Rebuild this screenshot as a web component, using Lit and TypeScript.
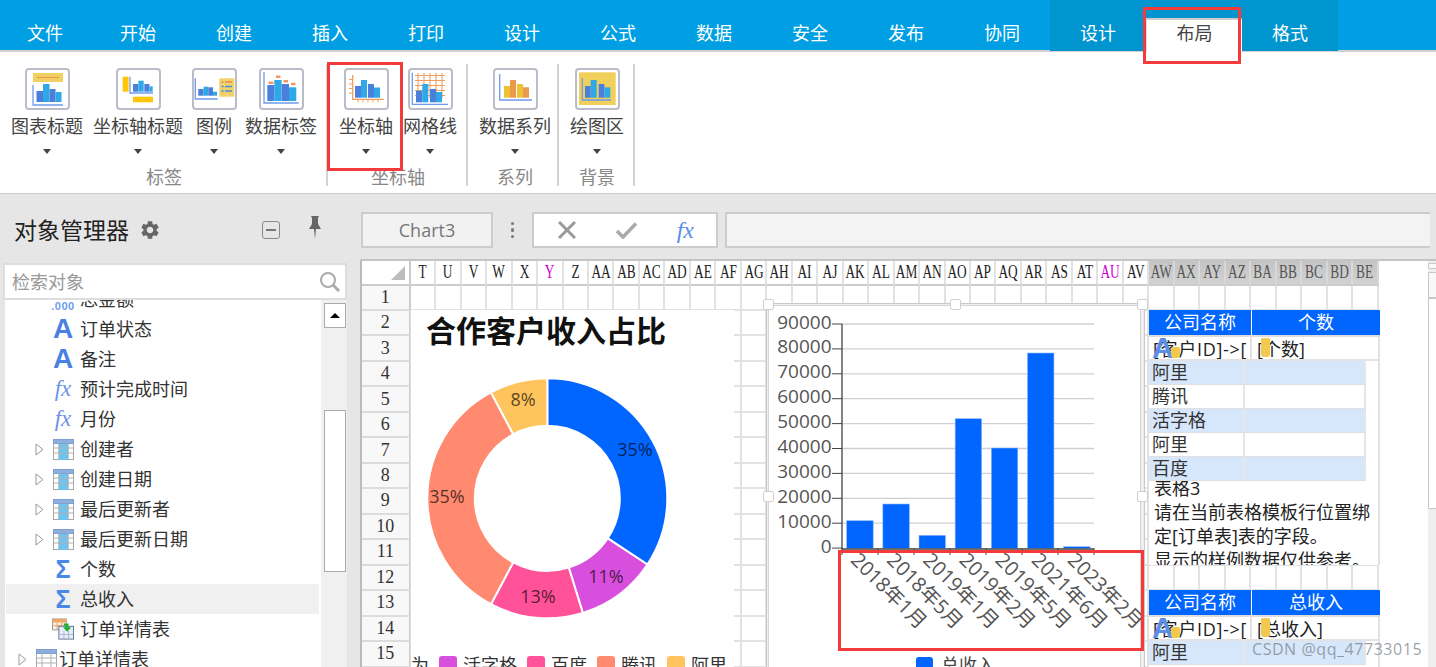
import {LitElement, css, html, svg} from 'lit';
import {customElement} from 'lit/decorators.js';

const TABS = ['文件', '开始', '创建', '插入', '打印', '设计', '公式', '数据', '安全', '发布', '协同'];
const COLS = ['T', 'U', 'V', 'W', 'X', 'Y', 'Z', 'AA', 'AB', 'AC', 'AD', 'AE', 'AF', 'AG', 'AH', 'AI', 'AJ', 'AK', 'AL', 'AM', 'AN', 'AO', 'AP', 'AQ', 'AR', 'AS', 'AT', 'AU', 'AV', 'AW', 'AX', 'AY', 'AZ', 'BA', 'BB', 'BC', 'BD', 'BE'];
const ROWS = Array.from({length: 16}, (_, i) => i + 1);

const TREE = [
  {icon: 'num', text: '总金额'},
  {icon: 'a', text: '订单状态'},
  {icon: 'a', text: '备注'},
  {icon: 'fx', text: '预计完成时间'},
  {icon: 'fx', text: '月份'},
  {icon: 'table', text: '创建者', caret: true},
  {icon: 'table', text: '创建日期', caret: true},
  {icon: 'table', text: '最后更新者', caret: true},
  {icon: 'table', text: '最后更新日期', caret: true},
  {icon: 'sum', text: '个数'},
  {icon: 'sum', text: '总收入', active: true},
  {icon: 'detail', text: '订单详情表'},
  {icon: 'plain', text: '订单详情表', caret: true, top: true},
];

// one bar set per ribbon icon: left edges, tops, base line, bar colours
const BLUE = ['#4a7fdc', '#2fa8e8'];
const WARM = ['#f0c233', '#ea9a4c'];
const bars = (xs: number[], w: number[], tops: number[], base: number, c = BLUE) =>
  xs.map((x, i) => svg`<rect x=${x} y=${tops[i]} width=${w[i]} height=${base - tops[i]} fill=${c[i % 2]}></rect>`);
const axes = (x: number, top: number, y: number, right: number, c = '#6d9bea') =>
  svg`<path d="M${x} ${top}V${y}H${right}" fill="none" stroke=${c} stroke-width="1.3"></path>`;

const ICONS = [
  svg`<rect x="8" y="5" width="30" height="9" fill="#f2cf62"></rect><path d="M12 9.5H34" stroke="#e59a4e" stroke-width="1.2"></path>
    ${axes(8, 17, 37, 38)}${bars([11.5, 18, 24.5, 30.5], [6.5, 6.5, 6, 6], [23, 16, 21, 24], 34)}`,
  svg`<rect x="6.6" y="8.7" width="6" height="15" fill="#ffc60a"></rect><rect x="17" y="28.7" width="20" height="5.6" fill="#ffc60a"></rect>
    ${axes(14, 8.7, 25, 37)}${bars([17, 22.4, 28.3, 33.4], [5.4, 5.3, 5.1, 3.3], [16, 12.7, 16, 18.3], 23.7)}`,
  svg`<rect x="27.3" y="10.3" width="15" height="18.4" fill="#f2d16c"></rect>
    <path d="M29.5 14h2M33 14h7" stroke="#e58a4e" stroke-width="1.6"></path><path d="M29.5 18.500h2M33 18.500h7M29.500 23h2M33 23h7" stroke="#3f8fdd" stroke-width="1.6"></path>
    ${axes(3.3, 10.3, 31, 25.7)}${bars([6.300, 11.600, 16.300, 21], [5.300, 4.700, 4.700, 4], [21, 18.700, 19.300, 23.700], 27.700)}`,
  svg`${axes(5, 4, 35, 39.700)}${bars([8.300, 15.300, 22.700, 30], [7, 7.300, 7.300, 7.300], [17, 12, 16, 19.300], 33)}
    <path d="M9.500 14.700h5M17 8.700h4.500M24.500 13.300h4.500M32 16h4.500" stroke="#ea9a6c" stroke-width="2.600"></path>`,
  svg`${axes(8.700, 7, 31.300, 39.700, '#ef9f5c')}<path d="M5 11.500h3.700M5 16h3.700M5 20.500h3.700M5 25h3.700M14 31.300v3M19 31.300v3M24 31.300v3M29 31.300v3M34 31.300v3" stroke="#ef9f5c" stroke-width="1"></path>
    ${bars([11, 17, 24, 30], [6, 6, 6, 6], [18, 12, 16, 19.500], 29.700)}`,
  svg`<path d="M7 7.500H37M7 12.500H37M7 17.500H37M7 22.500H37M7 27.500H37M10 5V30M16 5V30M22 5V30M28 5V30M34 5V30" stroke="#ef9f5c" stroke-width="1.100"></path>
    ${axes(4.300, 4.700, 36.300, 40)}${bars([8, 14.300, 22, 28], [6.300, 6, 6, 6], [22.700, 16, 21, 24], 34.300)}`,
  svg`${axes(6.700, 6, 32, 39)}${bars([11, 17, 24, 30], [6, 6, 6, 6], [18, 12, 16, 19.300], 29.700, WARM)}`,
  svg`<rect x="4" y="4.300" width="36.700" height="32.700" fill="#f0cf5a"></rect>
    ${axes(7.300, 10, 32, 36)}${bars([10, 15.700, 23.700, 29.300], [5.700, 6, 5.600, 6], [18, 12, 16, 19.300], 29.700)}`,
];

const RIBBON = [
  {label: '标签', items: [{t: '图表标题', i: 0}, {t: '坐标轴标题', i: 1}, {t: '图例', i: 2, narrow: true}, {t: '数据标签', i: 3}]},
  {label: '坐标轴', items: [{t: '坐标轴', i: 4}, {t: '网格线', i: 5}]},
  {label: '系列', items: [{t: '数据系列', i: 6}], tight: true},
  {label: '背景', items: [{t: '绘图区', i: 7}]},
];

// donut segments, degrees clockwise from 12 o'clock, in page coordinates
const DONUT = [
  {from: 0, to: 123.5, color: '#0066ff', label: '35%', x: 635, y: 450},
  {from: 123.5, to: 162.8, color: '#d94fdd', label: '11%', x: 606, y: 577},
  {from: 162.8, to: 208, color: '#ff5299', label: '13%', x: 538, y: 597},
  {from: 208, to: 332, color: '#ff8a70', label: '35%', x: 447, y: 497},
  {from: 332, to: 360, color: '#ffc45e', label: '8%', x: 523, y: 400},
];
const CX = 547.3;
const CY = 499.3;
const polar = (r: number, deg: number) => {
  const a = (deg * Math.PI) / 180;
  return `${CX + r * Math.sin(a)} ${CY - r * Math.cos(a)}`;
};
const slice = (from: number, to: number) => {
  const big = to - from > 180 ? 1 : 0;
  return `M${polar(120, from)}A120 120 0 ${big} 1 ${polar(120, to)}L${polar(72.5, to)}A72.5 72.5 0 ${big} 0 ${polar(72.5, from)}Z`;
};

const BAR_TOPS = [520.7, 504, 535.3, 418.7, 448, 353, 546.7];
const MONTHS = ['2018年1月', '2018年5月', '2019年1月', '2019年2月', '2019年5月', '2021年6月', '2023年2月'];
const TICKS = [90000, 80000, 70000, 60000, 50000, 40000, 30000, 20000, 10000, 0];

@customElement('app-root')
export class AppRoot extends LitElement {
  static styles = css`
    :host {
      display: block;
      position: relative;
      width: 1436px;
      height: 667px;
      overflow: hidden;
      background: #e6e6e6;
      font: 18px/24px "Open Sans", "Noto Sans CJK SC", sans-serif;
      color: #333;
    }
    * { box-sizing: border-box; }

    .tabs { display: flex; height: 52px; background: #009fe3; border-bottom: 2px solid #d0d0d0; }
    .tab { width: 96px; height: 50px; padding-top: 21px; text-align: center; color: #fff; }
    .tab.first { width: 90px; }
    .context { display: flex; height: 51px; background: #0095cf; }
    .tab.active {
      position: relative;
      height: 34px;
      margin-top: 18px;
      padding-top: 1px;
      background: #fff;
      color: #444;
      border-top: 2px solid #ccc;
      border-left: 1px solid #ddd;
    }

    .ribbon { display: flex; height: 142px; background: #fff; border-bottom: 1px solid #ccc; }
    .group {
      display: flex;
      flex-direction: column;
      height: 122px;
      margin-top: 12px;
      padding: 4px 9px 0 11px;
      border-right: 2px solid #d4d4d4;
    }
    .group.tight { padding-right: 6px; }
    .btns { display: flex; gap: 10px; }
    .btn { display: flex; flex-direction: column; align-items: center; }
    .btn.narrow { margin: 0 -1.5px; }
    .icon { width: 45px; height: 42px; background: #fff; border: 2px solid #babdc9; border-radius: 4px; display: block; }
    .btn-label { margin-top: 4px; white-space: nowrap; color: #444; }
    .arrow { width: 0; height: 0; margin-top: 11px; border: 4px solid transparent; border-top: 5px solid #444; border-bottom: 0; }
    .group-label { margin-top: auto; line-height: 18px; text-align: center; color: #888; }

    .work { display: flex; height: 473px; }

    .panel { display: flex; flex-direction: column; width: 360px; flex: none; }
    .panel-head { display: flex; align-items: center; height: 69px; padding: 3px 0 0 14px; }
    .panel-title { font-size: 23px; color: #222; }
    .gear { margin-left: 10px; }
    .minus {
      display: flex;
      align-items: center;
      justify-content: center;
      width: 18px;
      height: 18px;
      margin-left: 101px;
      border: 1.500px solid #888;
      border-radius: 3px;
    }
    .minus i { width: 10px; height: 1.500px; background: #777; }
    .pin { margin: -5px 0 0 29px; }
    .search {
      position: relative;
      z-index: 1;
      display: flex;
      align-items: center;
      justify-content: space-between;
      width: 344px;
      height: 37px;
      margin-left: 3px;
      padding: 0 4px 0 7px;
      background: #fff;
      border: 2px solid #ddd;
      color: #999;
    }
    .tree-wrap { display: flex; flex: 1; min-height: 0; margin-left: 5px; width: 342px; }
    .tree { width: 316px; overflow: hidden; background: #fff; }
    .tree-list { margin-top: -16px; }
    .row { display: flex; align-items: center; height: 30px; padding-left: 30px; white-space: nowrap; }
    .row.top { padding-left: 13px; }
    .row.active { background: #f0f0f0; margin-left: 1px; margin-right: 2px; padding-left: 29px; }
    .caret { width: 17px; flex: none; display: flex; }
    .ticon {
      display: flex;
      align-items: center;
      justify-content: center;
      width: 22px;
      height: 30px;
      margin-right: 6px;
      flex: none;
      color: #4a80e0;
      font-family: "Liberation Sans", sans-serif;
    }
    .row.top .ticon { margin-right: 2px; }
    .ticon.a { font-size: 28px; font-weight: 700; }
    .ticon.sum { font-size: 25px; font-weight: 700; color: #4a88e8; }
    .ticon.fx { font-family: "Liberation Serif", serif; font-style: italic; font-size: 23px; color: #6a93e8; }
    .ticon.num { font-size: 11px; font-weight: 700; letter-spacing: .5px; color: #6a9cf0; align-self: flex-end; height: 17px; }
    .vbar { display: flex; flex-direction: column; width: 26px; padding: 3px 1px 0 3px; background: #f0f0f0; }
    .vup { display: flex; align-items: center; justify-content: center; height: 25px; background: #fff; border: 1px solid #aaa; }
    .vup i { border: 5px solid transparent; border-bottom: 5px solid #000; border-top: 0; }
    .vthumb { height: 162px; margin-top: 82px; background: #fff; border: 1px solid #aaa; }

    .main { display: flex; flex-direction: column; flex: 1; min-width: 0; }
    .formula { display: flex; align-items: center; height: 36px; margin-top: 18px; }
    .name {
      width: 132px;
      height: 36px;
      margin-left: 1px;
      line-height: 33px;
      text-align: center;
      background: #f2f2f2;
      border: 2px solid #ccc;
      color: #777;
    }
    .dots { display: flex; flex-direction: column; gap: 3px; width: 39px; align-items: center; }
    .dots i { width: 3.500px; height: 3.500px; border-radius: 50%; background: #777; }
    .actions {
      display: flex;
      align-items: center;
      justify-content: space-between;
      width: 186px;
      height: 36px;
      padding: 0 22px 0 24px;
      background: #fff;
      border: 2px solid #ccc;
    }
    .fxbtn { font: italic 24px "Liberation Serif", serif; color: #5b8ee6; }
    .input { width: 705px; height: 36px; margin-left: 7px; background: #f3f3f3; border: 2px solid #ccc; border-right: 0; }

    .sheet-wrap { display: flex; height: 408px; margin-top: 11px; border-top: 2px solid #c4c4c4; }
    .sheet { position: relative; width: 1068px; overflow: hidden; background: #fff; border-left: 2px solid #bbb; }
    .grid { display: grid; grid-template-columns: 48.700px repeat(38, 25.480px); grid-template-rows: 24.500px repeat(16, 25.470px); }
    .cell { border-right: 2px solid #e2e2e2; border-bottom: 2px solid #e2e2e2; }
    .corner { position: relative; border-right: 2px solid #ccc; border-bottom: 2px solid #ccc; }
    .corner::after {
      content: "";
      position: absolute;
      right: 4px;
      bottom: 4px;
      border-style: solid;
      border-width: 0 0 14px 14px;
      border-color: transparent transparent #bdbdbd transparent;
    }
    .col {
      display: flex;
      align-items: center;
      justify-content: center;
      overflow: hidden;
      background: #fff;
      color: #222;
      font: 18px "Liberation Serif", serif;
      border-right: 2px solid #e2e2e2;
      border-bottom: 2px solid #ccc;
    }
    .col span { transform: scaleX(.74); white-space: nowrap; }
    .col.mark { color: #d000d0; }
    .col.dim { background: linear-gradient(#c4c4c4, #d2d2d2); color: #555; border-right-color: #d8d8d8; }
    .rowh {
      display: flex;
      align-items: center;
      justify-content: center;
      background: #f8f8f8;
      color: #333;
      font: 18px "Liberation Serif", serif;
      border-right: 2px solid #ccc;
      border-bottom: 2px solid #dcdcdc;
    }

    .pie { position: absolute; left: 48px; top: 49px; width: 324px; height: 360px; background: #fff; border-left: 1px solid #ddd; }
    .pie-title { padding-left: 15px; font-size: 30px; line-height: 42px; font-weight: 700; color: #111; white-space: nowrap; }
    .pie svg { display: block; }
    .legend { display: flex; align-items: center; gap: 10px; margin-top: 14px; height: 24px; white-space: nowrap; }
    .legend-item { display: flex; align-items: center; gap: 6px; }
    .swatch { width: 18px; height: 18px; border-radius: 3px; }

    .chart { position: absolute; left: 404px; top: 42px; width: 379px; height: 372px; background: #efefef; border: 1px solid #c8c8c8; padding: 1px 0 0 1px; }
    .chart svg { display: block; background: #fff; border: 1px solid #d4d4d4; overflow: visible; box-sizing: content-box; }
    .handle { position: absolute; width: 11px; height: 11px; background: #fff; border: 1.500px solid #d0d0d0; border-radius: 2px; }
    .h1 { left: -4px; top: -5px; }
    .h2 { left: 183px; top: -5px; }
    .h3 { right: -4px; top: -5px; }
    .h4 { left: -4px; top: 187px; }
    .h5 { right: -4px; top: 187px; }

    .binding { position: absolute; left: 787px; width: 231px; overflow: hidden; background: linear-gradient(#e2e2e2, #e2e2e2) right / 2px 100% no-repeat #fff; }
    .binding.one { top: 49px; height: 255px; }
    .binding.two { top: 329px; height: 90px; }
    .t-head { display: grid; grid-template-columns: 102px 1fr; gap: 1px; height: 25px; line-height: 25px; color: #fff; text-align: center; }
    .t-head div { background: #0066ff; }
    .t-bind { display: grid; grid-template-columns: 103px 1fr; height: 26px; line-height: 25px; border-top: 2px solid #ddd; border-bottom: 2px solid #e2e2e2; color: #222; }
    .t-bind > div { position: relative; padding-left: 4px; overflow: hidden; white-space: nowrap; border-right: 2px solid #e2e2e2; letter-spacing: .7px; }
    .t-bind > div + div { padding-left: 5px; border-right: 0; letter-spacing: 0; }
    .bind-a { position: absolute; left: 3px; top: -1px; color: #5a8ee8; font: 700 30px/24px "Liberation Sans", sans-serif; letter-spacing: 0; }
    .tag { position: absolute; width: 9px; border-radius: 2px 2px 3px 3px; background: #f2c94c; }
    .tag.a { left: 22px; top: 10px; height: 11px; }
    .tag.b { left: 9px; top: 1px; height: 19px; }
    .t-row { position: relative; display: grid; grid-template-columns: 96px 121px; width: 217px; height: 24px; line-height: 23px; background: #fff; border-bottom: 1px solid #e0e0e0; }
    .t-row div { padding-left: 3px; border-right: 2px solid #e6e6e6; white-space: nowrap; overflow: hidden; }
    .t-row.alt { background: #d6e6fb; }
    .note { margin-top: -5px; padding-left: 5px; color: #222; white-space: nowrap; }
    .note div { height: 24px; }

    .rail { flex: 1; display: flex; flex-direction: column; background: #efefef; padding-top: 2px; }
    .rail i { display: block; background: #f8f8f8; border: 1px solid #c8c8c8; border-right: 0; }
    .rail .r1 { height: 6px; }
    .rail .r2 { height: 26px; margin-top: 3px; }
    .rail .r3 { height: 211px; background: #fff; }

    .mark-box { position: absolute; border: 3px solid #f33b3b; pointer-events: none; }
    .mark-tab { left: 1143px; top: 7px; width: 98px; height: 57px; }
    .mark-axis { left: 327px; top: 62px; width: 76px; height: 109px; }
    .mark-labels { left: 838px; top: 550px; width: 306px; height: 101px; }
    .wm { position: absolute; left: 1252px; top: 637px; font: 16px/24px "Open Sans", sans-serif; letter-spacing: .55px; color: rgba(120, 125, 135, .72); }
  `;

  private treeIcon(kind: string) {
    if (kind === 'a') return html`<span class="ticon a">A</span>`;
    if (kind === 'fx') return html`<span class="ticon fx">fx</span>`;
    if (kind === 'sum') return html`<span class="ticon sum">Σ</span>`;
    if (kind === 'num') return html`<span class="ticon num">.000</span>`;
    if (kind === 'detail') {
      return html`<span class="ticon"><svg width="24" height="24" viewBox="0 0 24 24">
        <rect x=".5" y="1" width="15" height="12" fill="#fbf0e0" stroke="#999"></rect>
        <rect x=".5" y="1" width="15" height="4" fill="#f0a868"></rect>
        <path d="M1 8.500H15M5.500 5V13M10.500 5V13" stroke="#e5a060"></path>
        <rect x="7.500" y="9" width="16" height="14" fill="#e8eef8" stroke="#5a6f9a"></rect>
        <path d="M8 18H23M13 14V23M18 14V23" stroke="#aab6cc"></path>
        <path d="M13 6H18V10H21L16.500 15L12 10H15V8.500H13Z" fill="#1fb02f"></path>
      </svg></span>`;
    }
    const mid = kind === 'table' ? svg`<rect x="5.500" y="0" width="10" height="21" fill="#6cc4f0"></rect>` : svg``;
    return html`<span class="ticon"><svg width="21" height="21" viewBox="0 0 21 21">
      <rect x=".5" y=".5" width="20" height="20" fill="#fff" stroke="#a8a8a8"></rect>
      ${mid}
      <rect x=".5" y=".5" width="20" height="4" fill="#8eaedd" stroke="#7f9fd0"></rect>
      <path d="M1 9H20M1 14H20M6 4V20M15 4V20" stroke="#b0b0b0" fill="none"></path>
    </svg></span>`;
  }

  private renderRibbon() {
    return RIBBON.map(
      (g) => html`<div class="group ${g.tight ? 'tight' : ''}">
        <div class="btns">
          ${g.items.map(
            (b) => html`<div class="btn ${(b as {narrow?: boolean}).narrow ? 'narrow' : ''}">
              <svg class="icon" viewBox="2 2 41 38">${ICONS[b.i]}</svg>
              <div class="btn-label">${b.t}</div>
              <div class="arrow"></div>
            </div>`
          )}
        </div>
        <div class="group-label">${g.label}</div>
      </div>`
    );
  }

  private renderPanel() {
    return html`<div class="panel">
      <div class="panel-head">
        <span class="panel-title">对象管理器</span>
        <svg class="gear" width="22" height="22" viewBox="0 0 24 24" fill="#666"><path d="M19.14 12.94c.04-.3.06-.61.06-.94 0-.32-.02-.64-.07-.94l2.03-1.58a.49.49 0 0 0 .12-.61l-1.92-3.32a.488.488 0 0 0-.59-.22l-2.39.96c-.5-.38-1.03-.7-1.62-.94l-.36-2.54a.484.484 0 0 0-.48-.41h-3.84c-.24 0-.43.17-.47.41l-.36 2.54c-.59.24-1.13.57-1.62.94l-2.39-.96c-.22-.08-.47 0-.59.22L2.74 8.87c-.12.21-.08.47.12.61l2.03 1.58c-.05.3-.09.63-.09.94s.02.64.07.94l-2.03 1.58a.49.49 0 0 0-.12.61l1.92 3.32c.12.22.37.29.59.22l2.39-.96c.5.38 1.03.7 1.62.94l.36 2.54c.05.24.24.41.48.41h3.84c.24 0 .44-.17.47-.41l.36-2.54c.59-.24 1.13-.56 1.62-.94l2.39.96c.22.08.47 0 .59-.22l1.92-3.32c.12-.22.07-.47-.12-.61l-2.01-1.58zM12 15.6c-1.98 0-3.6-1.62-3.6-3.6s1.62-3.6 3.6-3.6 3.6 1.62 3.6 3.6-1.62 3.6-3.6 3.6z"></path></svg>
        <span class="minus"><i></i></span>
        <svg class="pin" width="12" height="23" viewBox="0 0 12 23" fill="#666"><path d="M2 0H10L9 2V8L12 13H7L6 23L5 13H0L3 8V2Z"></path></svg>
      </div>
      <div class="search">
        <span>检索对象</span>
        <svg width="22" height="22" viewBox="0 0 22 22" fill="none" stroke="#aaa" stroke-width="2"><circle cx="9" cy="9" r="7"></circle><path d="M14 14L20 20" stroke-width="3"></path></svg>
      </div>
      <div class="tree-wrap">
        <div class="tree">
          <div class="tree-list">
            ${TREE.map(
              (r) => html`<div class="row ${r.active ? 'active' : ''} ${r.top ? 'top' : ''}">
                <span class="caret">${r.caret
                  ? html`<svg width="9" height="13" viewBox="0 0 9 13"><path d="M1 1L8 6.500L1 12Z" fill="#fff" stroke="#999"></path></svg>`
                  : ''}</span>
                ${this.treeIcon(r.icon)}
                <span>${r.text}</span>
              </div>`
            )}
          </div>
        </div>
        <div class="vbar">
          <div class="vup"><i></i></div>
          <div class="vthumb"></div>
        </div>
      </div>
    </div>`;
  }

  private renderGrid() {
    return html`<div class="grid">
      <div class="corner"></div>
      ${COLS.map(
        (c, i) => html`<div class="col ${c === 'Y' || c === 'AU' ? 'mark' : ''} ${i >= 29 ? 'dim' : ''}"><span>${c}</span></div>`
      )}
      ${ROWS.map(
        (r) => html`<div class="rowh">${r}</div>${COLS.map(() => html`<div class="cell"></div>`)}`
      )}
    </div>`;
  }

  private renderPie() {
    const legend = [
      ['活字格', '#d94fdd'],
      ['百度', '#ff5299'],
      ['腾讯', '#ff8a70'],
      ['阿里', '#ffc45e'],
    ];
    return html`<div class="pie">
      <div class="pie-title">合作客户收入占比</div>
      <svg width="322" height="287" viewBox="411 353 322 287">
        ${DONUT.map((d) => svg`<path d=${slice(d.from, d.to)} fill=${d.color} stroke="#fff" stroke-width="2"></path>`)}
        ${DONUT.map(
          (d) => svg`<text x=${d.x} y=${d.y} text-anchor="middle" dominant-baseline="central" font-size="18" fill="#000" fill-opacity=".68">${d.label}</text>`
        )}
      </svg>
      <div class="legend">
        <span>为</span>
        ${legend.map(
          ([t, c]) => html`<span class="legend-item"><span class="swatch" style="background:${c}"></span>${t}</span>`
        )}
      </div>
    </div>`;
  }

  private renderChart() {
    return html`<div class="chart">
      <i class="handle h1"></i><i class="handle h2"></i><i class="handle h3"></i><i class="handle h4"></i><i class="handle h5"></i>
      <svg width="371" height="369" viewBox="769 306 371 369" font-size="20">
        ${TICKS.map((t, i) => {
          const y = 324 + i * 24.9;
          return svg`<path d="M832 ${y}H842" stroke="#444" stroke-width="1"></path>
            ${i < 9 ? svg`<path d="M842 ${y}H1094" stroke="#d0d0d0" stroke-width="1.300"></path>` : ''}
            <text x="831.500" y=${y - 2.5} text-anchor="end" dominant-baseline="central" font-size="19" fill="#555">${t}</text>`;
        })}
        ${BAR_TOPS.map(
          (top, i) => svg`<rect x=${846.7 + i * 36.15} y=${top} width="26.500" height=${548.3 - top} fill="#0066ff" stroke="#8fb8ff" stroke-width=".6"></rect>`
        )}
        <path d="M842 324V549H1094" fill="none" stroke="#444" stroke-width="1.300"></path>
        ${[0, 1, 2, 3, 4, 5, 6, 7].map(
          (i) => svg`<path d="M${842 + i * 36} 548V555" stroke="#444" stroke-width="1"></path>`
        )}
        ${MONTHS.map(
          (m, i) => svg`<text transform="translate(${855 + i * 36.15} 556) rotate(45)" dominant-baseline="central" fill="#555">${m}</text>`
        )}
        <rect x="916" y="657" width="17" height="17" rx="3" fill="#0066ff"></rect>
        <text x="941" y="665" dominant-baseline="central" font-size="18" fill="#444">总收入</text>
      </svg>
    </div>`;
  }

  private renderBinding() {
    return html`
      <div class="binding one">
        <div class="t-head"><div>公司名称</div><div>个数</div></div>
        <div class="t-bind">
          <div>[客户ID]->[<span class="bind-a">A</span><i class="tag a"></i></div>
          <div>[个数]<i class="tag b"></i></div>
        </div>
        ${['阿里', '腾讯', '活字格', '阿里', '百度'].map(
          (n, i) => html`<div class="t-row ${i % 2 ? '' : 'alt'}"><div>${n}</div><div></div></div>`
        )}
        <div class="note">
          <div>表格3</div>
          <div>请在当前表格模板行位置绑</div>
          <div>定[订单表]表的字段。</div>
          <div>显示的样例数据仅供参考。</div>
        </div>
      </div>
      <div class="binding two">
        <div class="t-head"><div>公司名称</div><div>总收入</div></div>
        <div class="t-bind">
          <div>[客户ID]->[<span class="bind-a">A</span><i class="tag a"></i></div>
          <div>[总收入]<i class="tag b"></i></div>
        </div>
        <div class="t-row alt"><div>阿里</div><div></div></div>
      </div>
    `;
  }

  render() {
    return html`
      <div class="tabs">
        ${TABS.map((t, i) => html`<div class="tab ${i === 0 ? 'first' : ''}">${t}</div>`)}
        <div class="context">
          <div class="tab">设计</div>
          <div class="tab active">布局</div>
          <div class="tab">格式</div>
        </div>
      </div>
      <div class="ribbon">${this.renderRibbon()}</div>
      <div class="work">
        ${this.renderPanel()}
        <div class="main">
          <div class="formula">
            <div class="name">Chart3</div>
            <div class="dots"><i></i><i></i><i></i></div>
            <div class="actions">
              <svg width="18" height="18" viewBox="0 0 18 18" stroke="#999" stroke-width="3"><path d="M1 1L17 17M17 1L1 17"></path></svg>
              <svg width="21" height="17" viewBox="0 0 21 17" fill="none" stroke="#aaa" stroke-width="3.500"><path d="M1 9L7 15L20 1.500"></path></svg>
              <span class="fxbtn">fx</span>
            </div>
            <div class="input"></div>
          </div>
          <div class="sheet-wrap">
            <div class="sheet">
              ${this.renderGrid()}
              ${this.renderPie()}
              ${this.renderBinding()}
              ${this.renderChart()}
            </div>
            <div class="rail"><i class="r1"></i><i class="r2"></i><i class="r3"></i></div>
          </div>
        </div>
      </div>
      <div class="mark-box mark-tab"></div>
      <div class="mark-box mark-axis"></div>
      <div class="mark-box mark-labels"></div>
      <div class="wm">CSDN @qq_47733015</div>
    `;
  }
}
